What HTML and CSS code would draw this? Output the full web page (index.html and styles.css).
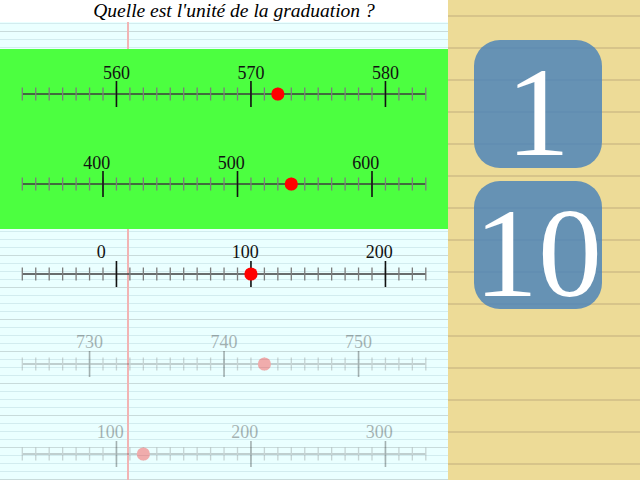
FILE: index.html
```html
<!DOCTYPE html>
<html lang="fr">
<head>
<meta charset="utf-8">
<title>Graduation</title>
<link rel="stylesheet" href="styles.css">
</head>
<body>
<svg class="defs" width="0" height="0" aria-hidden="true">
  <defs>
    <symbol id="ticks" viewBox="0 0 448 90">
      <path class="axis" d="M22.3 45H425.8"/>
      <path class="minor" d="M22.3 38.5v13M35.75 38.5v13M49.2 38.5v13M62.65 38.5v13M76.1 38.5v13M89.55 38.5v13M103 38.5v13M116.45 38.5v13M129.9 38.5v13M143.35 38.5v13M156.8 38.5v13M170.25 38.5v13M183.7 38.5v13M197.15 38.5v13M210.6 38.5v13M224.05 38.5v13M237.5 38.5v13M250.95 38.5v13M264.4 38.5v13M277.85 38.5v13M291.3 38.5v13M304.75 38.5v13M318.2 38.5v13M331.65 38.5v13M345.1 38.5v13M358.55 38.5v13M372 38.5v13M385.45 38.5v13M398.9 38.5v13M412.35 38.5v13M425.8 38.5v13"/>
    </symbol>
  </defs>
</svg>
<div class="app">
  <section class="sheet">
    <h1 class="title">Quelle est l'unité de la graduation ?</h1>
    <div class="rows">
      <div class="band">
        <svg class="row" viewBox="0 0 448 90" width="448" height="90">
          <use href="#ticks" width="448" height="90"/>
          <path class="major" d="M116.45 32v26M250.95 32v26M385.45 32v26"/>
          <text class="lbl" x="116.45" y="29.5">560</text>
          <text class="lbl" x="250.95" y="29.5">570</text>
          <text class="lbl" x="385.45" y="29.5">580</text>
          <circle class="dot" cx="277.85" cy="45" r="6.6"/>
        </svg>
        <svg class="row" viewBox="0 0 448 90" width="448" height="90">
          <use href="#ticks" width="448" height="90"/>
          <path class="major" d="M103 32v26M237.5 32v26M372 32v26"/>
          <text class="lbl start" x="83.3" y="29.5">400</text>
          <text class="lbl start" x="217.8" y="29.5">500</text>
          <text class="lbl start" x="352.3" y="29.5">600</text>
          <circle class="dot" cx="291.3" cy="45" r="6.6"/>
        </svg>
      </div>
      <svg class="row" viewBox="0 0 448 90" width="448" height="90">
        <use href="#ticks" width="448" height="90"/>
        <path class="major" d="M116.45 32v26M250.95 32v26M385.45 32v26"/>
        <text class="lbl start" x="96.7" y="29">0</text>
        <text class="lbl start" x="231.7" y="29">100</text>
        <text class="lbl start" x="365.7" y="29">200</text>
        <circle class="dot" cx="250.95" cy="45" r="6.6"/>
      </svg>
      <svg class="row faded" viewBox="0 0 448 90" width="448" height="90">
        <use href="#ticks" width="448" height="90"/>
        <path class="major" d="M89.55 32v26M224.05 32v26M358.55 32v26"/>
        <text class="lbl" x="89.55" y="29">730</text>
        <text class="lbl" x="224.05" y="29">740</text>
        <text class="lbl" x="358.55" y="29">750</text>
        <circle class="dot" cx="264.4" cy="45" r="6.6"/>
      </svg>
      <svg class="row faded" viewBox="0 0 448 90" width="448" height="90">
        <use href="#ticks" width="448" height="90"/>
        <path class="major" d="M116.45 32v26M250.95 32v26M385.45 32v26"/>
        <text class="lbl start" x="96.7" y="29">100</text>
        <text class="lbl start" x="231.3" y="29">200</text>
        <text class="lbl start" x="365.7" y="29">300</text>
        <circle class="dot" cx="143.35" cy="45" r="6.6"/>
      </svg>
    </div>
  </section>
  <aside class="pad">
    <div class="card">1</div>
    <div class="card">10</div>
  </aside>
</div>
</body>
</html>
```
FILE: styles.css
```css
html, body {
  margin: 0;
  padding: 0;
}
body {
  width: 640px;
  height: 480px;
  overflow: hidden;
  font-family: "Liberation Serif", "DejaVu Serif", serif;
}
.defs {
  position: absolute;
  width: 0;
  height: 0;
  overflow: hidden;
}
.app {
  display: flex;
  width: 640px;
  height: 480px;
}
.sheet {
  width: 448px;
  height: 480px;
  flex: none;
  display: flex;
  flex-direction: column;
  overflow: hidden;
  background-color: #eaffff;
  background-image:
    linear-gradient(to right, transparent 127px, #f2b4b4 127px, #f2b4b4 129px, transparent 129px),
    repeating-linear-gradient(to bottom, transparent 0, transparent 31px, #c8dbdb 31px, #c8dbdb 32px),
    repeating-linear-gradient(to bottom, transparent 0, transparent 7px, #d2ecef 7px, #d2ecef 8px);
}
.title {
  margin: 0;
  height: 22px;
  flex: none;
  background: #ffffff;
  font-family: "Liberation Serif", serif;
  font-style: italic;
  font-weight: normal;
  font-size: 19.5px;
  line-height: 22px;
  text-align: center;
  padding-left: 20px;
  color: #000;
  white-space: nowrap;
}
.rows {
  margin-top: 27px;
  display: flex;
  flex-direction: column;
}
.band {
  background: #4cff40;
  display: flex;
  flex-direction: column;
}
.row {
  display: block;
  flex: none;
}
.axis {
  stroke: #3c3c3c;
  stroke-width: 1.6;
  fill: none;
}
.minor {
  stroke: #7c7c7c;
  stroke-width: 1.3;
  fill: none;
}
.major {
  stroke: #111;
  stroke-width: 1.6;
  fill: none;
}
.lbl {
  font-family: "Liberation Serif", serif;
  font-size: 18px;
  fill: #111;
  text-anchor: middle;
}
.lbl.start {
  text-anchor: start;
}
.dot {
  fill: #ff0000;
}
.faded {
  opacity: 0.32;
}
.pad {
  width: 192px;
  height: 480px;
  flex: none;
  box-sizing: border-box;
  padding: 40px 0 0 26px;
  display: flex;
  flex-direction: column;
  gap: 13px;
  background-color: #eddb97;
  background-image: repeating-linear-gradient(to bottom, transparent 0, transparent 15px, #d7c48a 15px, #d7c48a 17px, transparent 17px, transparent 32px);
}
.card {
  width: 128px;
  height: 128px;
  border-radius: 26px;
  background: rgba(77, 133, 184, 0.85);
  color: #ffffff;
  font-family: "Liberation Serif", serif;
  font-size: 128px;
  line-height: 144px;
  text-align: center;
  overflow: visible;
}
```
